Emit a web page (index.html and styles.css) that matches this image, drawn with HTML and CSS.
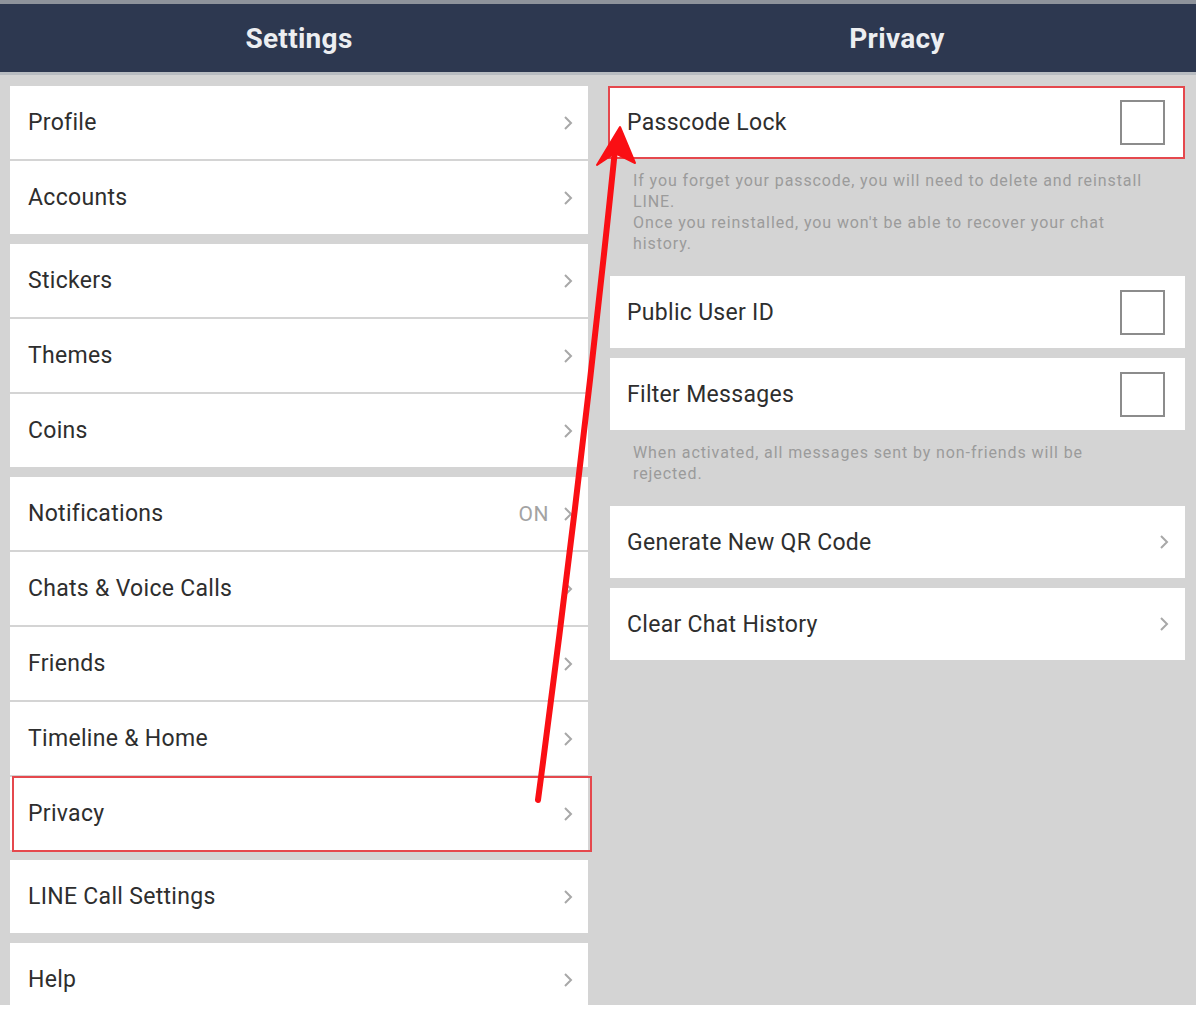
FILE: index.html
```html
<!DOCTYPE html>
<html lang="en">
<head>
    <meta charset="UTF-8">
    <meta name="viewport" content="width=device-width, initial-scale=1.0">
    <title>LINE Settings - Privacy</title>
    <link rel="stylesheet" href="styles.css">
</head>
<body>

<div id="app">
    <div id="topbar">
        <div class="title">Settings</div>
        <div class="title">Privacy</div>
    </div>

    <div id="panes">
        <div id="settings-pane">
            <div class="group">
                <div class="row"><span class="label">Profile</span><svg class="chev" viewBox="0 0 10 16"><polyline points="2,2 8,8 2,14"/></svg></div>
                <div class="row"><span class="label">Accounts</span><svg class="chev" viewBox="0 0 10 16"><polyline points="2,2 8,8 2,14"/></svg></div>
            </div>
            <div class="group">
                <div class="row"><span class="label">Stickers</span><svg class="chev" viewBox="0 0 10 16"><polyline points="2,2 8,8 2,14"/></svg></div>
                <div class="row"><span class="label">Themes</span><svg class="chev" viewBox="0 0 10 16"><polyline points="2,2 8,8 2,14"/></svg></div>
                <div class="row"><span class="label">Coins</span><svg class="chev" viewBox="0 0 10 16"><polyline points="2,2 8,8 2,14"/></svg></div>
            </div>
            <div class="group">
                <div class="row"><span class="label">Notifications</span><span class="state">ON</span><svg class="chev" viewBox="0 0 10 16"><polyline points="2,2 8,8 2,14"/></svg></div>
                <div class="row"><span class="label">Chats &amp; Voice Calls</span><svg class="chev" viewBox="0 0 10 16"><polyline points="2,2 8,8 2,14"/></svg></div>
                <div class="row"><span class="label">Friends</span><svg class="chev" viewBox="0 0 10 16"><polyline points="2,2 8,8 2,14"/></svg></div>
                <div class="row"><span class="label">Timeline &amp; Home</span><svg class="chev" viewBox="0 0 10 16"><polyline points="2,2 8,8 2,14"/></svg></div>
                <div class="row marked-left"><span class="label">Privacy</span><svg class="chev" viewBox="0 0 10 16"><polyline points="2,2 8,8 2,14"/></svg></div>
            </div>
            <div class="group">
                <div class="row"><span class="label">LINE Call Settings</span><svg class="chev" viewBox="0 0 10 16"><polyline points="2,2 8,8 2,14"/></svg></div>
            </div>
            <div class="group">
                <div class="row"><span class="label">Help</span><svg class="chev" viewBox="0 0 10 16"><polyline points="2,2 8,8 2,14"/></svg></div>
            </div>
        </div>

        <div id="privacy-pane">
            <div class="row marked-right"><span class="label">Passcode Lock</span><span class="checkbox"></span></div>
            <div class="note">If you forget your passcode, you will need to delete and reinstall<br>LINE.<br>Once you reinstalled, you won't be able to recover your chat<br>history.</div>

            <div class="row"><span class="label">Public User ID</span><span class="checkbox"></span></div>
            <div class="row spaced"><span class="label">Filter Messages</span><span class="checkbox"></span></div>
            <div class="note">When activated, all messages sent by non-friends will be<br>rejected.</div>

            <div class="row"><span class="label">Generate New QR Code</span><svg class="chev" viewBox="0 0 10 16"><polyline points="2,2 8,8 2,14"/></svg></div>
            <div class="row spaced"><span class="label">Clear Chat History</span><svg class="chev" viewBox="0 0 10 16"><polyline points="2,2 8,8 2,14"/></svg></div>
        </div>
    </div>

    <!-- annotation arrow drawn over the screenshot -->
    <svg id="arrow" viewBox="0 0 1196 1005">
        <path class="shaft" d="M538 800 Q 582 470 615 150"/>
        <polygon class="head" points="620,127 635,163 615,153 597,165"/>
    </svg>
</div>

</body>
</html>
```

FILE: styles.css
```css
body {
    margin: 0;
    padding: 0;
    background-color: #fff;
    font-family: Roboto, "Liberation Sans", Arial, sans-serif;
}

#app {
    position: relative;
    width: 1196px;
    height: 1005px;
    background-color: #d4d4d4;
    overflow: hidden;
}

#topbar {
    display: flex;
    height: 68px;
    border-top: 4px solid #8e939b;
    border-bottom: 3px solid #b8bcc1;
    background-color: #2d3850;
}

#topbar .title {
    flex: 1;
    display: flex;
    align-items: center;
    justify-content: center;
    color: #eceef1;
    font-size: 28px;
    font-weight: 700;
    letter-spacing: 0.3px;
}

#panes {
    display: flex;
}

#settings-pane {
    width: 578px;
    padding: 11px 10px 0 10px;
}

#privacy-pane {
    width: 575px;
    padding: 11px 11px 0 12px;
}

.group {
    margin-bottom: 10px;
}

.row {
    position: relative;
    display: flex;
    align-items: center;
    height: 73px;
    padding: 0 15px 0 18px;
    background-color: #fff;
}

.group .row + .row {
    margin-top: 2px;
}

#privacy-pane .row {
    height: 72px;
    padding-left: 17px;
    padding-right: 16px;
}

#privacy-pane .row.spaced {
    margin-top: 10px;
}

.label {
    flex: 1;
    color: #2e2e2e;
    font-size: 23px;
    letter-spacing: 0.3px;
}

.state {
    color: #a3a3a3;
    font-size: 21px;
    letter-spacing: 0.5px;
    margin-right: 14px;
}

.chev {
    width: 10px;
    height: 16px;
    fill: none;
    stroke: #a8a8a8;
    stroke-width: 2;
}

.checkbox {
    width: 41px;
    height: 41px;
    margin-right: 4px;
    border: 2px solid #8c8c8c;
    background-color: #fff;
}

.note {
    padding: 12px 20px 22px 23px;
    color: #9b9b9b;
    font-size: 16px;
    line-height: 21px;
    letter-spacing: 0.9px;
    white-space: nowrap;
}

.marked-left::after,
.marked-right::after {
    content: "";
    position: absolute;
    border: 2px solid #e5484d;
    pointer-events: none;
}

.marked-left::after {
    left: 2px;
    right: -4px;
    top: -1px;
    bottom: -2px;
}

.marked-right::after {
    left: -2px;
    right: 0;
    top: 0;
    bottom: -1px;
}

#arrow {
    position: absolute;
    left: 0;
    top: 0;
    width: 1196px;
    height: 1005px;
    pointer-events: none;
}

#arrow .shaft {
    fill: none;
    stroke: #fa0f14;
    stroke-width: 6;
    stroke-linecap: round;
}

#arrow .head {
    fill: #fa0f14;
    stroke: #fa0f14;
    stroke-width: 2;
    stroke-linejoin: round;
}
```
